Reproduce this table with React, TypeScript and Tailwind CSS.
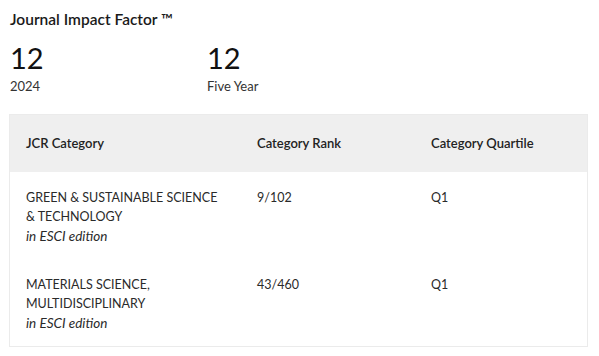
import React from 'react'

interface CategoryRow {
  name: string[]
  rank: string
  quartile: string
  edition: string
}

const rows: CategoryRow[] = [
  {
    name: ['GREEN & SUSTAINABLE SCIENCE', '& TECHNOLOGY'],
    rank: '9/102',
    quartile: 'Q1',
    edition: 'in ESCI edition',
  },
  {
    name: ['MATERIALS SCIENCE,', 'MULTIDISCIPLINARY'],
    rank: '43/460',
    quartile: 'Q1',
    edition: 'in ESCI edition',
  },
]

const App: React.FC = () => {
  return (
    <div
      className="h-[356px] w-[599px] bg-white pl-[9px] pr-[11px] pt-[9px] text-[#222]"
      style={{ fontFamily: 'Lato, "Noto Sans", sans-serif' }}
    >
      <h2 className="pl-px text-[15.5px] font-semibold leading-5 text-[#1a1a1a]">
        Journal Impact Factor ™
      </h2>
      <div className="mt-[13px] flex pl-px">
        <div className="w-[197px]">
          <div className="text-[29px] leading-8 text-[#111]">12</div>
          <div className="mt-[4px] text-[13px] leading-4 text-[#333]">2024</div>
        </div>
        <div>
          <div className="text-[29px] leading-8 text-[#111]">12</div>
          <div className="mt-[4px] text-[13px] leading-4 text-[#333]">Five Year</div>
        </div>
      </div>
      <div className="mt-[20px] border border-[#ebebeb]">
        <div className="grid h-[57px] grid-cols-[231px_174px_1fr] items-center bg-[#efefef] pl-4 text-[13px] font-semibold text-[#222]">
          <div>JCR Category</div>
          <div>Category Rank</div>
          <div>Category Quartile</div>
        </div>
        {rows.map((row) => (
          <div
            key={row.rank}
            className="grid grid-cols-[231px_174px_1fr] pb-[13px] pl-4 pt-[16px] text-[12.5px] leading-[19px] text-[#2a2a2a]"
          >
            <div>
              {row.name.map((line) => (
                <div key={line}>{line}</div>
              ))}
              <div className="mt-px text-[13.5px] italic">{row.edition}</div>
            </div>
            <div>{row.rank}</div>
            <div>{row.quartile}</div>
          </div>
        ))}
      </div>
    </div>
  )
}

export default App
